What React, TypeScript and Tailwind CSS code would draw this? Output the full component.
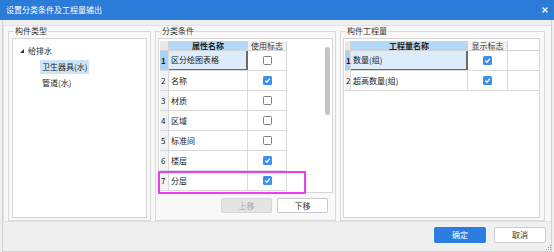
import React from 'react';

interface Row {
  name: string;
  checked: boolean;
}

const conditions: Row[] = [
  { name: '区分绘图表格', checked: false },
  { name: '名称', checked: true },
  { name: '材质', checked: false },
  { name: '区域', checked: false },
  { name: '标准间', checked: false },
  { name: '楼层', checked: true },
  { name: '分层', checked: true },
];

const quantities: Row[] = [
  { name: '数量(组)', checked: true },
  { name: '超高数量(组)', checked: true },
];

const Box = ({ checked }: { checked: boolean }) =>
  checked ? (
    <span className="w-[9px] h-[9px] rounded-[1.5px] bg-[#3b8eea] flex items-center justify-center">
      <svg width="7" height="7" viewBox="0 0 7 7">
        <path d="M1.2 3.6 L2.9 5.2 L5.9 1.8" stroke="#fff" strokeWidth="1.3" fill="none" />
      </svg>
    </span>
  ) : (
    <span className="w-[9px] h-[9px] rounded-[1.5px] border border-[#7d7d7d] bg-white" />
  );

interface GridProps {
  rows: Row[];
  numW: string;
  nameW: string;
  checkW: string;
  nameTitle: string;
  checkTitle: string;
}

const Grid: React.FC<GridProps> = ({ rows, numW, nameW, checkW, nameTitle, checkTitle }) => (
  <div className="flex flex-col">
    <div className="flex h-[10px] border-b border-[#d3d3d3]">
      <div className={`${numW} bg-[#e9e9e9] border-r border-[#d3d3d3]`} />
      <div className={`${nameW} bg-[#b4d8f8] border-r border-[#d3d3d3] flex items-center justify-center font-bold text-[8px] leading-none text-[#222]`}>
        {nameTitle}
      </div>
      <div className={`${checkW} bg-[#f2f2f2] border-r border-[#d3d3d3] flex items-center justify-center text-[8px] leading-none text-[#333]`}>
        {checkTitle}
      </div>
    </div>
    {rows.map((r, i) => {
      const sel = i === 0;
      return (
        <div key={i} className="flex h-[20px] border-b border-[#d9d9d9]">
          <div
            className={`${numW} border-r border-[#d9d9d9] flex items-center text-[8px] leading-none text-[#222] overflow-visible ${
              sel ? 'bg-[#a9d1f7] font-bold' : 'bg-[#f3f3f3]'
            }`}
          >
            <span className="pl-[1px]">{i + 1}</span>
          </div>
          <div
            className={`${nameW} flex items-center pl-[2px] text-[8px] leading-none text-[#222] ${
              sel ? 'bg-[#dcecfb] border-r-2 border-b border-[#6a6a6a]' : 'border-r border-[#d9d9d9]'
            }`}
          >
            {r.name}
          </div>
          <div className={`${checkW} border-r border-[#d9d9d9] flex items-center justify-center`}>
            <Box checked={r.checked} />
          </div>
        </div>
      );
    })}
  </div>
);

const Legend = ({ children }: { children: React.ReactNode }) => (
  <legend className="ml-[5px] px-[1px] text-[8px] leading-[10px] text-[#333]">{children}</legend>
);

export default function App() {
  return (
    <div className="w-[554px] h-[252px] bg-[#efefef] flex flex-col font-['Noto_Sans_CJK_SC','Liberation_Sans',sans-serif] relative">
      <div className="h-[20px] bg-[#2b7bd8] flex items-center justify-between pl-[6px] pr-[6px] text-white text-[8px] leading-none">
        <span>设置分类条件及工程量输出</span>
        <svg width="6" height="6" viewBox="0 0 6 6">
          <path d="M0.5 0.5 L5.5 5.5 M5.5 0.5 L0.5 5.5" stroke="#fff" strokeWidth="1.2" />
        </svg>
      </div>

      <div className="flex-1 mx-[2px] border-x border-b border-[#d2d2d2] flex flex-col pt-[5px]">
        <div className="h-[197px] border-y border-l border-[#e1e1e1] bg-[#f8f8f8] flex gap-[4px] pl-[4px]">
          <fieldset className="w-[143px] h-[195px] border border-[#d9d9d9]">
            <Legend>构件类型</Legend>
            <div className="mt-[2px] mx-[3px] h-[180px] bg-white border border-[#d6d6d6] pt-[4px] text-[8px] leading-none text-[#222]">
              <div className="h-[16px] flex items-center pl-[7px] gap-[4px]">
                <svg width="4" height="4" viewBox="0 0 4 4">
                  <polygon points="4,0 4,4 0,4" fill="#333" />
                </svg>
                <span>给排水</span>
              </div>
              <div className="h-[16px] flex items-center pl-[27px]">
                <span className="bg-[#cce4f8] px-[2px] h-[14px] flex items-center">卫生器具(水)</span>
              </div>
              <div className="h-[16px] flex items-center pl-[29px]">
                <span>管道(水)</span>
              </div>
            </div>
          </fieldset>

          <fieldset className="w-[181px] h-[195px] border border-[#d9d9d9]">
            <Legend>分类条件</Legend>
            <div className="relative mt-[2px] mx-[2px] h-[155px] bg-white border border-[#d6d6d6] flex pl-[1px] pt-[2px]">
              <Grid
                rows={conditions}
                numW="w-[9px]"
                nameW="w-[79px]"
                checkW="w-[39px]"
                nameTitle="属性名称"
                checkTitle="使用标志"
              />
              <div className="flex-1" />
              <div className="w-[5px] mr-[2px] pt-[6px]">
                <div className="h-[68px] rounded-full bg-[#c4c4c4]" />
              </div>
              <div className="absolute left-[-1px] top-[132px] w-[148px] h-[23px] border-2 border-[#f03cf0]" />
            </div>
            <div className="mt-[5px] flex justify-end gap-[5px] pr-[7px]">
              <button className="w-[51px] h-[15px] bg-[#e4e4e4] border border-[#d6d6d6] rounded-[2px] text-[8px] leading-none text-[#a8a8a8]">
                上移
              </button>
              <button className="w-[51px] h-[15px] bg-white border border-[#c9c9c9] rounded-[2px] text-[8px] leading-none text-[#333]">
                下移
              </button>
            </div>
          </fieldset>

          <fieldset className="w-[205px] h-[195px] border border-[#d9d9d9]">
            <Legend>构件工程量</Legend>
            <div className="mt-[2px] ml-[2px] w-[197px] h-[180px] bg-white border border-[#d6d6d6] pl-[1px] pt-[2px]">
              <Grid
                rows={quantities}
                numW="w-[6px]"
                nameW="w-[117px]"
                checkW="w-[40px]"
                nameTitle="工程量名称"
                checkTitle="显示标志"
              />
            </div>
          </fieldset>
        </div>

        <div className="mt-[5px] flex justify-end gap-[8px] pr-[5px]">
          <button className="w-[52px] h-[16px] bg-[#2b7de0] rounded-[2px] text-[8px] leading-none text-white">确定</button>
          <button className="w-[52px] h-[16px] bg-white border border-[#cfcfcf] rounded-[2px] text-[8px] leading-none text-[#333]">
            取消
          </button>
        </div>
      </div>

      <svg className="absolute right-[3px] bottom-[2px]" width="5" height="5" viewBox="0 0 5 5">
        <rect x="4" y="0" width="1" height="1" fill="#9a9a9a" />
        <rect x="2" y="2" width="1" height="1" fill="#9a9a9a" />
        <rect x="4" y="2" width="1" height="1" fill="#9a9a9a" />
        <rect x="0" y="4" width="1" height="1" fill="#9a9a9a" />
        <rect x="2" y="4" width="1" height="1" fill="#9a9a9a" />
        <rect x="4" y="4" width="1" height="1" fill="#9a9a9a" />
      </svg>
    </div>
  );
}
